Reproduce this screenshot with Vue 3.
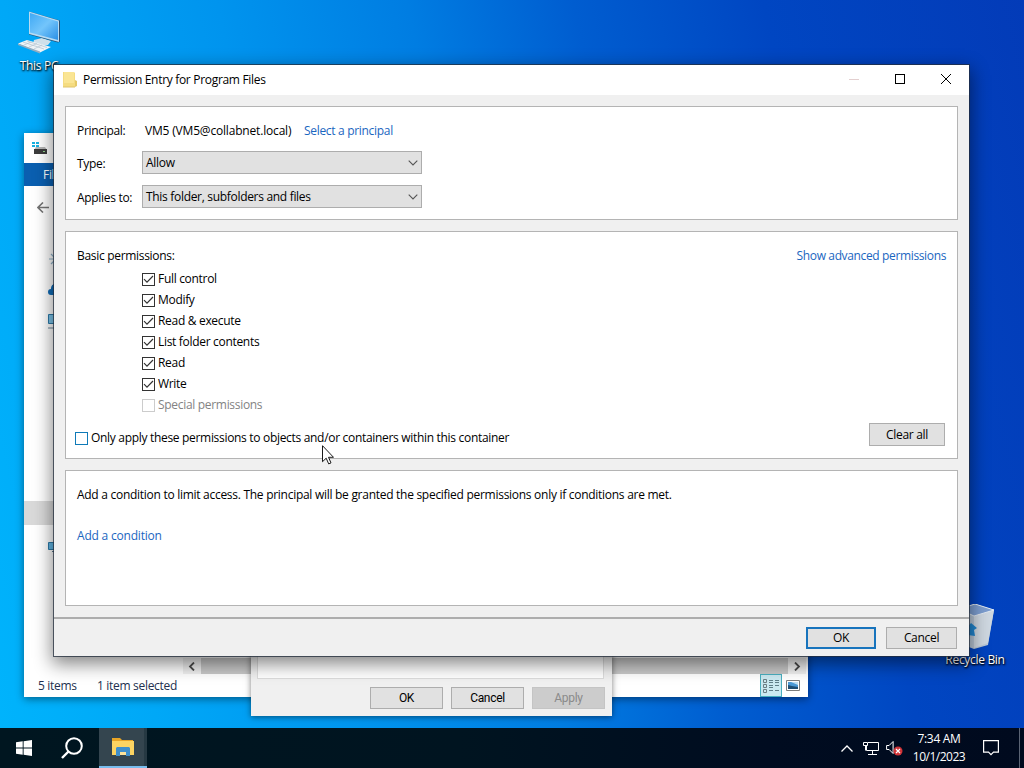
<template>
  <div class="desktop">
    <div class="shortcut this-pc">
      <svg width="48" height="46" viewBox="0 0 48 46">
        <defs>
          <linearGradient id="screen" x1="0" y1="0" x2="1" y2="1">
            <stop offset="0" stop-color="#3fa9f5" />
            <stop offset="0.5" stop-color="#73c5fb" />
            <stop offset="1" stop-color="#2a8fe6" />
          </linearGradient>
        </defs>
        <path d="M19 31l8-2 9 3-3 4-7 1-8-2z" fill="#cfe0ea" />
        <path d="M14 2.500l31 9v21l-2 1-29-8z" fill="#274d70" />
        <path d="M14 2.500l30 9v21.500l-30-8z" fill="#b6dbf3" />
        <path d="M15 4l28 8.400v18.600L15 23.500z" fill="url(#screen)" />
        <path d="M3 34.500l9-3.500 24 7-11 5.500z" fill="#eef3f6" />
        <path d="M3 34.500l22 8v2L3 36z" fill="#93adc0" />
        <path d="M8 33l21 7M12 32l20 6.500M9 36l7-3M14 38l8-3.500M19 40l8-4" stroke="#b3c3d0" stroke-width="0.7" fill="none" />
      </svg>
      <span>This PC</span>
    </div>

    <div class="shortcut recycle-bin">
      <svg width="48" height="48" viewBox="0 0 48 48">
        <path d="M8 5l16-5 19 6-6 35-14 4-13-5z" fill="#b9c7d6" />
        <path d="M23 12l20-6-6 33-14 5z" fill="#ced7e0" />
        <path d="M8 5l16-5 19 6-20 6z" fill="#7d9ed0" />
        <path d="M8 5l16-5 19 6-20 6z" fill="none" stroke="#e3eaf2" stroke-width="1" />
        <path d="M14 26l6-7 6 5-3 2 1 6-7-1z" fill="#2186cf" />
      </svg>
      <span>Recycle Bin</span>
    </div>

    <div class="window explorer">
      <div class="explorer-title">
        <svg width="16" height="14" viewBox="0 0 16 14">
          <path d="M0 1h3v2H0zM4 1h3v2H4zM0 4h3v2H0zM4 4h3v2H4z" fill="#18b0e0" />
          <path d="M4 6h9l2 3H2z" fill="#b5b5b5" />
          <path d="M2 8h13v5H2z" fill="#3b3b3b" />
          <path d="M11 10h2v1h-2z" fill="#8fd18a" />
        </svg>
      </div>
      <div class="ribbon"><span>File</span></div>
      <div class="explorer-nav">
        <svg width="13" height="11" viewBox="0 0 13 11">
          <path d="M6 .5L1 5.500l5 5M1.500 5.500H12" fill="none" stroke="#747474" stroke-width="1.600" />
        </svg>
      </div>
      <div class="tree">
        <div class="tree-row">
          <svg width="16" height="16" viewBox="0 0 16 16"><path d="M8 1v14M1 8h14M3 3l10 10M13 3L3 13" stroke="#8fb2c8" stroke-width="1.200" /></svg>
        </div>
        <div class="tree-row">
          <svg width="16" height="16" viewBox="0 0 16 16"><path d="M3 13a3 3 0 0 1 0-6 5 5 0 0 1 10-1 3.500 3.500 0 0 1 0 7z" fill="#0f6cb8" /></svg>
        </div>
        <div class="tree-row">
          <svg width="16" height="16" viewBox="0 0 16 16"><path d="M.5 1.500h15v9H.5z" fill="#7cc4ea" stroke="#2d7aa8" /><path d="M0 15h14" stroke="#6b879c" /></svg>
        </div>
        <div class="tree-selected"></div>
        <div class="tree-row network">
          <svg width="16" height="16" viewBox="0 0 16 16"><path d="M.5 3.500h15v7H.5z" fill="#62b7e6" stroke="#2d7aa8" /><path d="M4 12.500h8" stroke="#58788e" /></svg>
        </div>
      </div>
      <div class="scrollbar">
        <div class="scroll-arrow"><svg width="8" height="9" viewBox="0 0 8 9"><path d="M6 .5l-4 4 4 4" fill="none" stroke="#4c4c4c" stroke-width="1.800" /></svg></div>
        <div class="scroll-thumb"></div>
        <div class="scroll-arrow"><svg width="8" height="9" viewBox="0 0 8 9"><path d="M2 .5l4 4-4 4" fill="none" stroke="#4c4c4c" stroke-width="1.800" /></svg></div>
      </div>
      <div class="status-bar">
        <span class="item-count">5 items</span>
        <span>1 item selected</span>
        <div class="view-button active">
          <svg width="16" height="14" viewBox="0 0 16 14" fill="none">
            <path d="M.5.5h3v3h-3zM.5 5.500h3v3h-3zM.5 10.500h3v3h-3z" stroke="#6b7d84" />
            <path d="M6 1.500h4M6 3.500h4M12 1.500h4M12 3.500h4M6 6.500h4M6 8.500h4M12 6.500h4M6 11.500h4M12 11.500h4" stroke="#53727d" stroke-width="0.900" />
          </svg>
        </div>
        <div class="view-button">
          <svg width="14" height="12" viewBox="0 0 14 12">
            <path d="M.5.5h13v10H.5z" fill="#fff" stroke="#7d7d7d" />
            <path d="M2 2h10v7H2z" fill="#4c9ad6" />
            <path d="M2 5l4 1 6 1v2H2z" fill="#1f4e73" />
            <path d="M5 2h7v3z" fill="#c2e0f2" />
          </svg>
        </div>
      </div>
    </div>

    <div class="window properties">
      <div class="properties-page"></div>
      <div class="properties-buttons">
        <button>OK</button>
        <button>Cancel</button>
        <button disabled>Apply</button>
      </div>
    </div>

    <div class="window permission">
      <header class="title-bar">
        <svg class="folder" width="14" height="17" viewBox="0 0 14 17">
          <path d="M0 0h11l1 1v14H0z" fill="#f5dc80" />
          <path d="M1 0h10v11H1z" fill="#fae594" />
          <path d="M12 8l2 1v5l-2 1z" fill="#e5c967" />
          <path d="M0 15h12" stroke="#dfc46b" />
        </svg>
        <h1>Permission Entry for Program Files</h1>
        <svg class="caption" width="138" height="30" viewBox="0 0 138 30" shape-rendering="crispEdges">
          <path d="M18 14.500h10" stroke="#e3cfcf" />
          <rect x="64.500" y="9.500" width="9" height="9" fill="none" stroke="#000" />
          <path d="M110 9l10 10M120 9l-10 10" stroke="#000" shape-rendering="auto" />
        </svg>
      </header>

      <main class="body">
        <section class="panel principal">
          <div class="field">
            <label>Principal:</label>
            <span class="principal-name">VM5 (VM5@collabnet.local)</span>
            <a class="select-principal">Select a principal</a>
          </div>
          <div v-for="field in fields" :key="field.label" class="field combo-field">
            <label>{{ field.label }}</label>
            <div class="combo">
              <span>{{ field.value }}</span>
              <svg width="10" height="6" viewBox="0 0 10 6"><path d="M.7.7L5 5 9.300.7" fill="none" stroke="#555" stroke-width="1.100" /></svg>
            </div>
          </div>
        </section>

        <section class="panel permissions">
          <div class="panel-header">
            <span>Basic permissions:</span>
            <a class="advanced">Show advanced permissions</a>
          </div>
          <ul>
            <li v-for="item in permissions" :key="item.name" :class="{ disabled: item.disabled }">
              <span class="box">
                <svg v-if="item.checked" width="11" height="11" viewBox="0 0 11 11"><path d="M1 5.200l3 3L10 2" fill="none" stroke="#333" stroke-width="1.200" /></svg>
              </span>
              <span>{{ item.name }}</span>
            </li>
          </ul>
          <div class="panel-footer">
            <div class="only-apply">
              <span class="box"></span>
              <span>Only apply these permissions to objects and/or containers within this container</span>
            </div>
            <button class="clear">Clear all</button>
          </div>
        </section>

        <section class="panel condition">
          <p>Add a condition to limit access. The principal will be granted the specified permissions only if conditions are met.</p>
          <a>Add a condition</a>
        </section>
      </main>

      <footer>
        <button class="default">OK</button>
        <button>Cancel</button>
      </footer>
    </div>

    <div class="taskbar">
      <div class="task start">
        <svg width="16" height="16" viewBox="0 0 16 16"><path d="M0 2.300L6.700 1.300v6.300H0zM7.600 1.200L16 0v7.600H7.600zM0 8.500h6.700v6.300L0 13.800zM7.600 8.500H16V16l-8.400-1.200z" fill="#fff" /></svg>
      </div>
      <div class="task search">
        <svg width="22" height="22" viewBox="0 0 22 22"><circle cx="13" cy="9" r="7.800" fill="none" stroke="#fff" stroke-width="2" /><path d="M7.500 14.500L1 21" stroke="#fff" stroke-width="2.400" /></svg>
      </div>
      <div class="task running">
        <svg width="22" height="18" viewBox="0 0 22 18">
          <path d="M0 0h8l2 2h11v7H0z" fill="#e9a526" />
          <path d="M0 3h22v14H0z" fill="#fcd462" />
          <path d="M4 18v-8l1-1h12l1 1v8h-4v-4H8v4z" fill="#3f8fcb" />
          <path d="M8 14h6v3H8z" fill="#fde39a" />
        </svg>
      </div>
      <div class="tray">
        <svg class="chevron" width="12" height="7" viewBox="0 0 12 7"><path d="M.5 6.500L6 1l5.500 5.500" fill="none" stroke="#fff" stroke-width="1.300" /></svg>
        <svg class="network-icon" width="16" height="15" viewBox="0 0 16 15" fill="none" stroke="#fff"><path d="M5 1.500h10.500v8H3.500V5M9.500 9.500v4M5 13.500h9M.5 1.500h4v3h-4zM2.500 5v4.500" /></svg>
        <svg class="volume" width="17" height="16" viewBox="0 0 17 16">
          <path d="M.6 5.500h2.500l4-4v12l-4-4H.6z" fill="none" stroke="#fff" />
          <circle cx="12" cy="11" r="4.500" fill="#d13438" />
          <path d="M10 9l4 4M14 9l-4 4" stroke="#fff" stroke-width="1.200" />
        </svg>
        <div class="clock">
          <span>7:34 AM</span>
          <span class="date">10/1/2023</span>
        </div>
        <svg class="notifications" width="16" height="16" viewBox="0 0 16 16"><path d="M.6.6h14.800v11.500H10.500L8 14.700l-2.500-2.600H.6z" fill="none" stroke="#fff" stroke-width="1.200" /></svg>
        <div class="show-desktop"></div>
      </div>
    </div>

    <svg class="cursor" width="12" height="20" viewBox="0 0 12 20">
      <path d="M.5.7v16l3.700-3.500 2.500 5.700 2.300-1-2.500-5.600h5z" fill="#fff" stroke="#000" stroke-width="0.900" />
    </svg>
  </div>
</template>

<script setup>
const fields = [
  { label: 'Type:', value: 'Allow' },
  { label: 'Applies to:', value: 'This folder, subfolders and files' }
]

const permissions = [
  { name: 'Full control', checked: true },
  { name: 'Modify', checked: true },
  { name: 'Read & execute', checked: true },
  { name: 'List folder contents', checked: true },
  { name: 'Read', checked: true },
  { name: 'Write', checked: true },
  { name: 'Special permissions', checked: false, disabled: true }
]
</script>

<style>
body {
  margin: 0;
  overflow: hidden;
}
</style>

<style scoped>
.desktop {
  position: relative;
  width: 1024px;
  height: 768px;
  overflow: hidden;
  background: linear-gradient(78deg, #00b4fc 0%, #00a8f7 14%, #0094ee 32%, #007de2 48%, #005dd0 62%, #0046c2 78%, #033bb8 100%);
  font-family: "Open Sans", "Noto Sans", sans-serif;
  font-size: 12px;
  letter-spacing: -0.31px;
  line-height: 16px;
  color: #000;
  white-space: nowrap;
}

svg {
  display: block;
  flex: none;
}

.shortcut {
  position: absolute;
  display: flex;
  flex-direction: column;
  align-items: center;
  width: 76px;
  color: #fff;
  text-shadow: 0 1px 2px #000, 1px 1px 2px #000;
}

.this-pc {
  left: 1px;
  top: 9px;
}

.this-pc span {
  margin-top: 3px;
}

.recycle-bin {
  left: 937px;
  top: 604px;
}

.recycle-bin svg {
  margin-left: -26px;
  transform: translateX(13px);
}

.window {
  position: absolute;
  display: flex;
  flex-direction: column;
  box-sizing: border-box;
}

button {
  box-sizing: border-box;
  height: 22px;
  padding: 0;
  border: 1px solid #adadad;
  background: #e1e1e1;
  color: #000;
  font: inherit;
  letter-spacing: inherit;
  line-height: 18px;
}

a {
  color: #1a66bf;
}

.explorer {
  left: 24px;
  top: 133px;
  width: 784px;
  height: 564px;
  background: #fff;
  box-shadow: 0 2px 8px rgba(0, 0, 0, 0.45);
}

.explorer-title {
  height: 30px;
  padding: 8px 0 0 8px;
  box-sizing: border-box;
}

.ribbon {
  height: 23px;
  padding-left: 19px;
  background: #0a5fb0;
  color: #fff;
  line-height: 23px;
}

.explorer-nav {
  padding: 16px 0 0 13px;
}

.tree {
  padding-top: 38px;
}

.tree-row {
  height: 31px;
  padding-left: 24px;
}

.tree-selected {
  width: 160px;
  height: 24px;
  margin-top: 157px;
  background: #d9d9d9;
}

.tree-row.network {
  margin-top: 14px;
}

.scrollbar {
  display: flex;
  height: 16px;
  box-sizing: border-box;
  width: 623px;
  margin: auto 0 0 159px;
  background: #f0f0f0;
}

.scroll-arrow {
  display: flex;
  align-items: center;
  justify-content: center;
  width: 18px;
}

.scroll-thumb {
  flex: 1;
  background: #c9c9c9;
}

.status-bar {
  display: flex;
  align-items: center;
  height: 23px;
  padding: 0 4px 0 14px;
  color: #22304f;
}

.item-count {
  width: 59px;
}

.view-button {
  display: flex;
  align-items: center;
  justify-content: center;
  width: 20px;
  height: 21px;
  border: 1px solid transparent;
}

.view-button.active {
  margin-left: auto;
  border-color: #4aafc0;
  background: #cbe9f1;
}

.properties {
  left: 251px;
  top: 400px;
  width: 361px;
  height: 316px;
  padding: 7px;
  background: #f0f0f0;
  box-shadow: 0 1px 6px rgba(0, 0, 0, 0.5);
}

.properties-page {
  height: 270px;
  margin: 0 1px 0 -1px;
  border: 1px solid #dcdcdc;
  background: #fff;
}

.properties-buttons {
  display: flex;
  justify-content: flex-end;
  gap: 8px;
  padding-top: 8px;
  font-family: Roboto, sans-serif;
}

.properties-buttons button {
  width: 73px;
}

.properties-buttons button:disabled {
  border-color: #c4c4c4;
  background: #ccc;
  color: #8a8a8a;
}

.permission {
  left: 53px;
  top: 64px;
  width: 917px;
  height: 593px;
  border: 1px solid rgba(35, 45, 60, 0.75);
  background: #f0f0f0;
  background-clip: padding-box;
  box-shadow: 0 6px 17px 1px rgba(0, 0, 0, 0.48);
}

.title-bar {
  display: flex;
  align-items: center;
  height: 30px;
  padding-left: 9px;
  background: #fff;
}

h1 {
  margin: 0 0 0 6px;
  font-size: inherit;
  font-weight: normal;
}

.caption {
  margin-left: auto;
}

.body {
  display: flex;
  flex-direction: column;
  gap: 11px;
  padding: 11px;
}

.panel {
  box-sizing: border-box;
  padding: 14px 11px 0;
  border: 1px solid #b4b4b4;
  background: #fff;
}

.principal {
  height: 114px;
}

.permissions {
  height: 228px;
}

.condition {
  height: 136px;
}

.field {
  display: flex;
  align-items: center;
  height: 20px;
}

.field label {
  width: 65px;
}

.principal-name {
  width: 159px;
  padding-left: 3px;
  letter-spacing: -0.18px;
}

.combo-field {
  height: 23px;
  margin-top: 10px;
}

.combo-field + .combo-field {
  margin-top: 11px;
}

.combo-field label {
  padding-top: 2px;
}

.combo {
  display: flex;
  align-items: center;
  justify-content: space-between;
  box-sizing: border-box;
  width: 280px;
  height: 23px;
  padding: 0 3px;
  border: 1px solid #adadad;
  background: #e1e1e1;
}

.panel-header {
  display: flex;
  align-items: center;
  justify-content: space-between;
  height: 20px;
}

.advanced {
  letter-spacing: -0.36px;
}

ul {
  margin: 2px 0 0 65px;
  padding: 0;
  list-style: none;
}

li,
.only-apply {
  display: flex;
  align-items: center;
  gap: 3px;
  height: 21px;
}

.box {
  box-sizing: border-box;
  width: 13px;
  height: 13px;
  border: 1px solid #333;
  background: #fff;
}

li .box {
  margin-top: 1px;
}

.disabled {
  color: #838383;
}

.disabled .box {
  border-color: #ccc;
}

.panel-footer {
  display: flex;
  justify-content: space-between;
  margin: 8px 1px 0 -2px;
}

.only-apply {
  padding-top: 4px;
}

.only-apply .box {
  margin-top: 1px;
  border-color: #0f7ab8;
}

.clear {
  width: 76px;
  height: 23px;
}

.condition p {
  margin: 0 0 21px;
  letter-spacing: -0.28px;
  line-height: 20px;
}

.condition a {
  letter-spacing: -0.2px;
  line-height: 20px;
}

footer {
  display: flex;
  justify-content: flex-end;
  gap: 10px;
  padding: 8px 12px 0 0;
  border-top: 2px solid #adadad;
}

footer button {
  width: 71px;
}

footer .default {
  width: 70px;
  border: 2px solid #1874bd;
  line-height: 16px;
}

.taskbar {
  position: absolute;
  left: 0;
  bottom: 0;
  display: flex;
  width: 1024px;
  height: 40px;
  background: linear-gradient(90deg, #001620 0%, #001420 45%, #000c20 75%, #000a1e 100%);
  color: #fff;
}

.task {
  display: flex;
  align-items: center;
  justify-content: center;
  box-sizing: border-box;
  width: 48px;
}

.search {
  width: 51px;
  padding-right: 3px;
}

.running {
  border-bottom: 2px solid #78bdee;
  background: #34454f;
  box-shadow: inset -3px 0 #263943;
}

.tray {
  display: flex;
  align-items: center;
  margin-left: auto;
}

.network-icon {
  margin-left: 10px;
}

.volume {
  margin-left: 7px;
}

.clock {
  display: flex;
  flex-direction: column;
  align-items: center;
  width: 72px;
  line-height: 18px;
}

.date {
  letter-spacing: -0.5px;
}

.notifications {
  margin-left: 8px;
}

.show-desktop {
  width: 4px;
  height: 40px;
  margin-left: 20px;
  border-left: 1px solid #5b6474;
}

.cursor {
  position: absolute;
  left: 322px;
  top: 445px;
}
</style>
